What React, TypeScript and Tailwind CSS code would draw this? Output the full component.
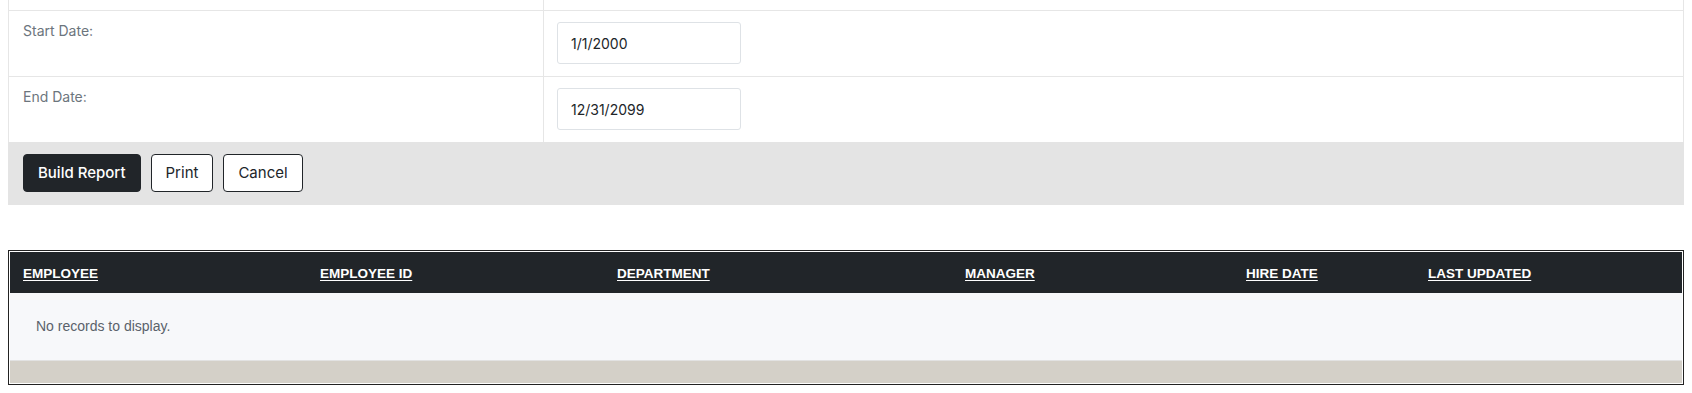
import React from "react";

const columns = [
  { label: "EMPLOYEE", width: "w-[297px]" },
  { label: "EMPLOYEE ID", width: "w-[297px]" },
  { label: "DEPARTMENT", width: "w-[348px]" },
  { label: "MANAGER", width: "w-[281px]" },
  { label: "HIRE DATE", width: "w-[182px]" },
  { label: "LAST UPDATED", width: "flex-1" },
];

function DateRow({ label, value }: { label: string; value: string }) {
  return (
    <div className="flex border-t border-[#e6e6e6]">
      <div className="w-[535px] shrink-0 border-r border-[#e6e6e6] pl-[14px] pt-[10px] text-[14px] leading-[20px] text-[#6c757d]">
        {label}
      </div>
      <div className="flex-1 pt-[11px] pb-[12px] pl-[13px]">
        <input
          readOnly
          value={value}
          className="h-[42px] w-[184px] rounded-[3px] border border-[#dee2e6] bg-white px-[13px] text-[14px] text-[#212529] outline-none"
        />
      </div>
    </div>
  );
}

export default function App() {
  return (
    <div className="min-h-[393px] bg-white px-2 font-['Inter',sans-serif]">
      {/* Filter form */}
      <div className="border-x border-[#e6e6e6]">
        <div className="flex h-[10px]">
          <div className="w-[535px] shrink-0 border-r border-[#e6e6e6]" />
          <div className="flex-1" />
        </div>
        <DateRow label="Start Date:" value="1/1/2000" />
        <DateRow label="End Date:" value="12/31/2099" />
      </div>

      {/* Action Buttons */}
      <div className="flex h-[63px] items-start gap-[10px] bg-[#e4e4e4] pl-[15px] pt-[12px]">
        <button className="h-[38px] rounded-[4px] border border-[#212529] bg-[#212529] px-[14px] text-[15px] font-medium text-white">
          Build Report
        </button>
        <button className="h-[38px] rounded-[4px] border border-[#212529] bg-white px-[14px] text-[15px] text-[#212529]">
          Print
        </button>
        <button className="h-[38px] rounded-[4px] border border-[#212529] bg-white px-[14px] text-[15px] text-[#212529]">
          Cancel
        </button>
      </div>

      {/* Results Grid */}
      <div className="mt-[45px] border border-[#222] bg-white p-px font-['Liberation_Sans',Arial,sans-serif]">
        <div className="flex h-[41px] items-center bg-[#212529]">
          {columns.map((c) => (
            <div key={c.label} className={`${c.width} shrink-0 pl-[13px]`}>
              <a className="cursor-pointer text-[13.5px] font-bold text-white underline underline-offset-2">
                {c.label}
              </a>
            </div>
          ))}
        </div>
        <div className="flex h-[67px] items-center bg-[#f7f8fa] pl-[26px] text-[14px] text-[#5a626b]">
          No records to display.
        </div>
        <div className="h-[23px] border-t border-[#e2e2e2] bg-[#d4d0c8]" />
      </div>
    </div>
  );
}
